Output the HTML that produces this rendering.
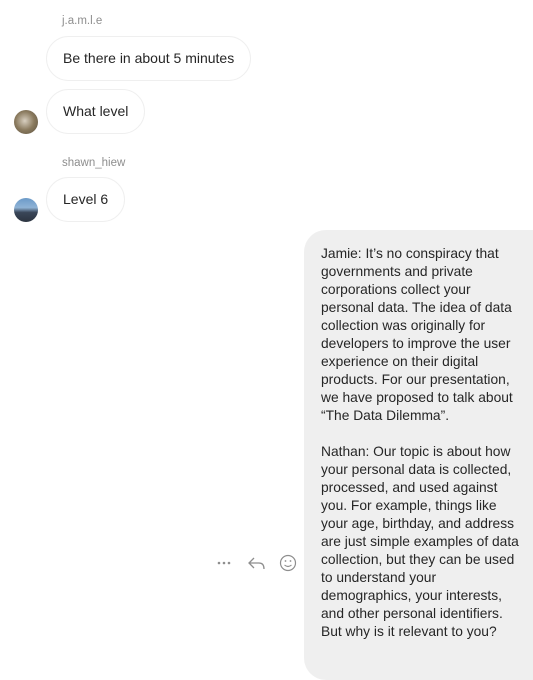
<!DOCTYPE html>
<html><head><meta charset="utf-8"><style>
body{margin:0;width:533px;height:658px;background:#fff;position:relative;overflow:hidden;font-family:"Segoe UI","Liberation Sans",sans-serif;color:#262626}
.n{position:absolute;left:62px;font-size:11.5px;color:#8e8e8e}
.b{position:absolute;left:46px;height:45px;border:1px solid #efefef;border-radius:23px;box-sizing:border-box;font-size:14px;line-height:43px;padding:0 16px;white-space:nowrap}
.av{position:absolute;left:14px;width:24px;height:24px;border-radius:50%}
.g{position:absolute;left:304px;top:230px;width:260px;height:450px;background:#efefef;border-radius:22px}
.t{position:absolute;left:321px;top:245px;font-size:13.8px;line-height:18px;white-space:pre}
</style></head><body>
<div class="n" style="top:15px">j.a.m.l.e</div>
<div class="b" style="top:36px">Be there in about 5 minutes</div>
<div class="b" style="top:89px">What level</div>
<div class="av" style="top:110px;background:radial-gradient(circle at 45% 45%,#d8cfc0,#8a7a5e 50%,#5a5040)"></div>
<div class="n" style="top:157px">shawn_hiew</div>
<div class="b" style="top:177px">Level 6</div>
<div class="av" style="top:198px;background:linear-gradient(#6b9ac8 0%,#8fb3d6 40%,#3a4658 60%,#2c3440)"></div>
<div class="g"></div>
<div class="t">Jamie: It’s no conspiracy that
governments and private
corporations collect your
personal data. The idea of data
collection was originally for
developers to improve the user
experience on their digital
products. For our presentation,
we have proposed to talk about
“The Data Dilemma”.

Nathan: Our topic is about how
your personal data is collected,
processed, and used against
you. For example, things like
your age, birthday, and address
are just simple examples of data
collection, but they can be used
to understand your
demographics, your interests,
and other personal identifiers.
But why is it relevant to you?</div>
<svg style="position:absolute;left:214px;top:553px" width="90" height="20" viewBox="0 0 90 20">
<g fill="#8e8e8e"><circle cx="5" cy="10" r="1.3"/><circle cx="10" cy="10" r="1.3"/><circle cx="15" cy="10" r="1.3"/></g>
<path d="M40 5 L35 10 L40 15 M35 10 H45 Q50 10 50 16" fill="none" stroke="#8e8e8e" stroke-width="1.3"/>
<circle cx="74" cy="10" r="7.5" fill="none" stroke="#8e8e8e" stroke-width="1.2"/>
<circle cx="71.5" cy="8" r=".9" fill="#8e8e8e"/><circle cx="76.5" cy="8" r=".9" fill="#8e8e8e"/>
<path d="M70.5 12 Q74 15 77.5 12" fill="none" stroke="#8e8e8e" stroke-width="1.1"/>
</svg>
</body></html>
